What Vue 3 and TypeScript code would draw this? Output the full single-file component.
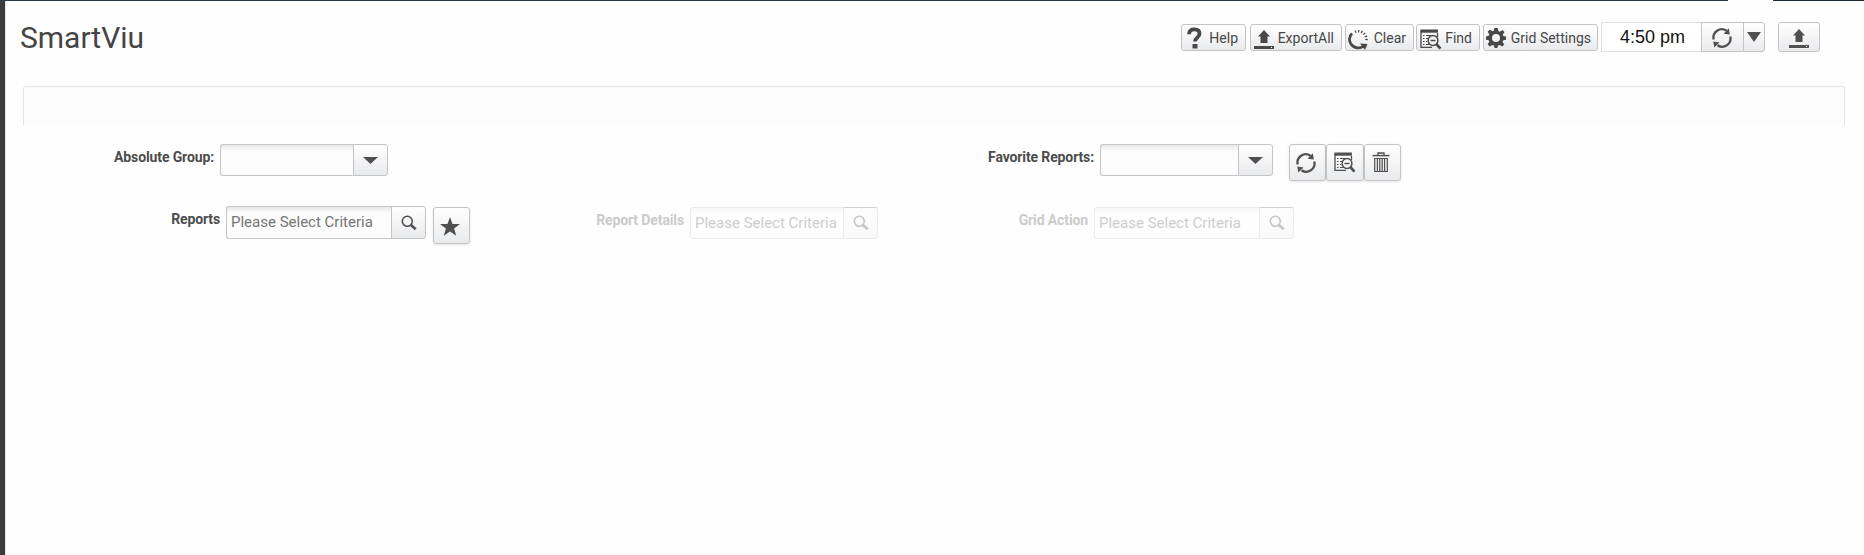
<script setup lang="ts">
import { ref } from 'vue'

interface Action { id: string; label: string; width: number; gap: number }
interface Lookup { id: string; label: string; disabled: boolean }

const title = 'SmartViu'
const time = ref('4:50 pm')
const actions: Action[] = [
  { id: 'help', label: 'Help', width: 65, gap: 4 },
  { id: 'export', label: 'ExportAll', width: 92, gap: 3 },
  { id: 'clear', label: 'Clear', width: 69, gap: 2 },
  { id: 'find', label: 'Find', width: 64, gap: 3 },
  { id: 'gear', label: 'Grid Settings', width: 115, gap: 3 },
]
const lookups: Lookup[] = [
  { id: 'reports', label: 'Reports', disabled: false },
  { id: 'details', label: 'Report Details', disabled: true },
  { id: 'grid-action', label: 'Grid Action', disabled: true },
]
const tools = ['refresh', 'find', 'trash']
</script>

<template>
  <svg class="defs" aria-hidden="true">
    <symbol id="help" viewBox="0 0 20 22">
      <path d="M4 7.200C4 3.600 6.200 2.400 9.400 2.400c3.400 0 5.100 1.700 5.100 4.300 0 3.800-4.500 4-4.500 7.800" fill="none" stroke="currentColor" stroke-width="3.800" />
      <path d="M7.500 17h5v4.500h-5z" fill="currentColor" />
    </symbol>
    <symbol id="export" viewBox="0 0 20 20">
      <path d="M10 0l6 6.500h-2.500V13h-7V6.500H4z" fill="currentColor" />
      <path d="M0 16h20v3H0z" fill="currentColor" />
      <path d="M17 17h1v1h-1z" fill="#fff" />
    </symbol>
    <symbol id="clear" viewBox="0 0 20 20">
      <path d="M4 3.500A8 8 0 0 0 3 14c3 4.500 9 5 12.500 2" fill="none" stroke="currentColor" stroke-width="2.800" />
      <path d="M12 13.500l7.500.5-2.500 6z" fill="currentColor" />
      <path d="M7 1.800A8.300 8.300 0 0 1 18.300 11" fill="none" stroke="currentColor" stroke-width="2.600" stroke-dasharray="1.200 1.900" />
    </symbol>
    <symbol id="find" viewBox="0 0 22 21">
      <path d="M1 2v16.300h11M17.500 4v4" fill="none" stroke="currentColor" stroke-width="1.300" />
      <path d="M.4.500h17.500v3.200H.4z" fill="currentColor" />
      <path d="M3 6.500h1.500M3 9.500h1.500M3 12.500h1.500M3 15.500h1.500M6 6.500h5M6 9.500h2M6 12.500h1M6 15.500h3" stroke="currentColor" stroke-width="1.200" />
      <circle cx="13" cy="11.500" r="4.900" fill="none" stroke="currentColor" stroke-width="1.500" />
      <path d="M10.500 11.500h5" stroke="currentColor" stroke-width="1.400" />
      <path d="M16.300 15l4.200 4.600" stroke="currentColor" stroke-width="2.600" />
    </symbol>
    <symbol id="gear" viewBox="0 0 20 20">
      <path fill="currentColor" fill-rule="evenodd" d="M8.300 0h3.400l.6 3 1.600.7L16.500 2l2 2-1.700 2.600.5 1.300 2.700.5v3.300l-2.700.6-.7 1.600 1.700 2.500-2.200 2.200-2.500-1.700-1.600.6-.6 2.500H8.600L8 17.500l-1.500-.6-2.600 1.700-2.300-2.300 1.700-2.500-.6-1.500L0 11.700V8.400l2.700-.6.6-1.500L1.700 3.800l2.200-2.200 2.500 1.700 1.400-.5zM10 6a4 4 0 1 0 0 8 4 4 0 0 0 0-8z" />
    </symbol>
    <symbol id="refresh" viewBox="0 0 20 20">
      <path d="M1.700 11.500A8.300 8.300 0 0 1 14.500 2.800M18.300 8.500A8.300 8.300 0 0 1 5.500 17.200" fill="none" stroke="currentColor" stroke-width="2.300" />
      <path d="M16.800.3l1 6.200-6.200-.8zM1.200 13.600l6.300.8-5.200 5.200z" fill="currentColor" />
    </symbol>
    <symbol id="trash" viewBox="0 0 18 21">
      <path d="M6 3.500V1h6v2.500" fill="none" stroke="currentColor" stroke-width="1.300" />
      <path d="M.5 3.600h17" stroke="currentColor" stroke-width="1.500" />
      <path d="M2.700 6.500h12.600v13H2.700zM5.400 7v12M7.800 7v12M10.200 7v12M12.600 7v12" fill="none" stroke="currentColor" stroke-width="1.200" />
    </symbol>
    <symbol id="search" viewBox="0 0 16 16">
      <circle cx="6.300" cy="6.300" r="5" fill="none" stroke="currentColor" stroke-width="1.600" />
      <path d="M10 10l4.700 4.200" stroke="currentColor" stroke-width="2.700" />
    </symbol>
    <symbol id="star" viewBox="0 0 20 19">
      <path d="M10 0l2.500 6.900 7.500.2-5.900 4.500 2.100 7.100L10 14.500l-6.200 4.200 2.100-7.100L0 7.100l7.500-.2z" fill="currentColor" />
    </symbol>
    <symbol id="down" viewBox="0 0 14 10" preserveAspectRatio="none">
      <path d="M0 0h14L7 10z" fill="currentColor" />
    </symbol>
  </svg>

  <div class="page">
    <div class="topline"><i class="line-left"></i><i class="line-right"></i></div>
    <header class="header">
      <h1>{{ title }}</h1>
      <nav class="toolbar">
        <button v-for="a in actions" :key="a.id" class="btn action" :class="'action-' + a.id" :style="{ width: a.width + 'px', marginRight: a.gap + 'px' }">
          <svg class="icon" :class="'icon-' + a.id"><use :href="'#' + a.id" /></svg>
          <span>{{ a.label }}</span>
        </button>
        <div class="clock">
          <span class="time">{{ time }}</span>
          <button class="btn reload"><svg class="icon"><use href="#refresh" /></svg></button>
          <button class="btn more"><svg class="caret-tall"><use href="#down" /></svg></button>
        </div>
        <button class="btn upload"><svg class="icon"><use href="#export" /></svg></button>
      </nav>
    </header>

    <div class="panel"></div>

    <form class="criteria" @submit.prevent>
      <div class="row">
        <div class="field group">
          <label>Absolute Group:</label>
          <div class="combo"><input type="text" /><button class="btn"><svg class="caret"><use href="#down" /></svg></button></div>
        </div>
        <div class="field favorite">
          <label>Favorite Reports:</label>
          <div class="combo"><input type="text" /><button class="btn"><svg class="caret"><use href="#down" /></svg></button></div>
          <div class="tools">
            <button v-for="t in tools" :key="t" class="btn square"><svg class="icon" :class="'icon-' + t"><use :href="'#' + t" /></svg></button>
          </div>
        </div>
      </div>
      <div class="row">
        <div v-for="l in lookups" :key="l.id" class="field" :class="[l.id, { disabled: l.disabled }]">
          <label>{{ l.label }}</label>
          <div class="combo">
            <input type="text" placeholder="Please Select Criteria" :disabled="l.disabled" />
            <button class="btn" :disabled="l.disabled"><svg class="lens"><use href="#search" /></svg></button>
          </div>
          <button v-if="!l.disabled" class="btn square star"><svg class="icon"><use href="#star" /></svg></button>
        </div>
      </div>
    </form>
  </div>
</template>

<style>
body { background: #fefefe; }
</style>

<style scoped>
* { box-sizing: border-box; }
.defs { position: absolute; width: 0; height: 0; }
.page {
  width: 1864px; height: 555px; overflow: hidden;
  border-left: 5px solid #3b3b3b; background: #fefefe;
  font-family: Roboto, sans-serif; color: #4c4c4c;
  box-shadow: inset 1px 0 #e4e4e4;
}
.topline { display: flex; justify-content: space-between; height: 1px; }
.line-left { width: 1723px; background: #253740; }
.line-right { width: 91px; background: #1c2932; }
.header { display: flex; justify-content: space-between; height: 85px; padding: 21px 44px 0 15px; }
h1 { margin: -2px 0 0; font-size: 30px; line-height: 36px; font-weight: 400; color: #444; }
.toolbar { display: flex; align-items: flex-start; }
.btn {
  display: flex; align-items: center; justify-content: center; flex: none;
  margin: 0; padding: 0; border: 1px solid #c4c4c6; border-radius: 3px;
  background: linear-gradient(#fff, #e9eaec); color: #505050; font-family: inherit;
}
.icon { width: 20px; height: 20px; flex: none; }
.action { justify-content: space-between; height: 27px; margin-top: 2px; padding: 1px 7px 0 3px; font-size: 14px; color: #484848; }
.action-clear, .action-gear { padding-left: 2px; }
.action-gear { padding-right: 6px; }
.action .icon-help { height: 22px; }
.action .icon-find { width: 22px; height: 21px; margin-top: 3px; }
.action .icon-export, .action .icon-clear { margin-top: 3px; }
.clock { display: flex; height: 30px; margin-right: 13px; }
.time {
  width: 100px; padding-left: 2px; border: 1px solid #dedede; border-right: 0; background: #fff;
  color: #111; font: 18px/28px "Liberation Sans", Arial, sans-serif; text-align: center;
}
.reload { width: 43px; border-radius: 0; }
.reload .icon { margin: 2px 2px 0 0; }
.more { width: 22px; margin-left: -1px; border-radius: 0 3px 3px 0; }
.caret-tall { width: 14px; height: 10px; }
.upload { width: 42px; height: 30px; }
.upload .icon { margin-top: 3px; }
.panel { width: 1822px; height: 39px; margin-left: 18px; border: 1px solid #e4e4e4; border-bottom: 0; border-radius: 3px 3px 0 0; background: #fcfcfc; }
.criteria { padding-top: 19px; }
.row { display: flex; height: 62px; }
.field { display: flex; align-items: flex-start; }
label { flex: none; text-align: right; font-size: 14px; font-weight: 700; line-height: 16px; letter-spacing: -0.12px; padding-top: 5px; white-space: nowrap; }
.combo { display: flex; height: 32px; flex: none; }
.combo input {
  flex: 1; min-width: 0; height: 100%; margin: 0; padding: 0 4px 1px; outline: 0;
  border: 1px solid #c6c6c6; border-right: 0; border-radius: 3px 0 0 3px;
  background: linear-gradient(#e8e8e8, #fcfcfc 6px); font: 15px Roboto, sans-serif;
}
.combo input::placeholder { color: #757575; opacity: 1; }
.combo .btn { width: 35px; border-radius: 0 3px 3px 0; }
.caret { width: 15px; height: 7px; margin-right: 1px; }
.lens { width: 16px; height: 16px; }
.square { width: 38px; height: 37px; box-shadow: 0 1px 3px #0000001c; }
.group { width: 895px; }
.group label { width: 209px; margin-right: 6px; }
.group .combo { width: 168px; }
.favorite label { width: 194px; margin-right: 6px; }
.favorite .combo { width: 173px; }
.tools { display: flex; margin-left: 16px; }
.tools .square { width: 37.330px; }
.tools .icon { margin-right: 3px; }
.tools .icon-find { width: 22px; height: 21px; margin-right: 0; }
.tools .icon-trash { width: 18px; height: 21px; }
.reports { width: 500px; }
.reports label { width: 215px; margin-right: 6px; }
.reports .combo { width: 200px; height: 33px; }
.star { margin: 1px 0 0 7px; width: 37px; }
.star .icon { height: 19px; margin: 2px 3px 0 0; }
.disabled { padding-top: 1px; }
.disabled label { color: #cbcbcb; }
.details label { width: 179px; margin-right: 6px; }
.details .combo { width: 188px; }
.grid-action label { width: 210px; margin-right: 6px; }
.grid-action .combo { width: 200px; }
.disabled input { border-color: #ececec; background: linear-gradient(#f8f8f8, #fefefe 6px); }
.disabled input::placeholder { color: #cdcdcd; }
.disabled .btn { border-color: #d0d0d0 #ececec #ececec; background: linear-gradient(#fdfdfd, #f8f9f9); color: #c5c5c5; }
</style>
